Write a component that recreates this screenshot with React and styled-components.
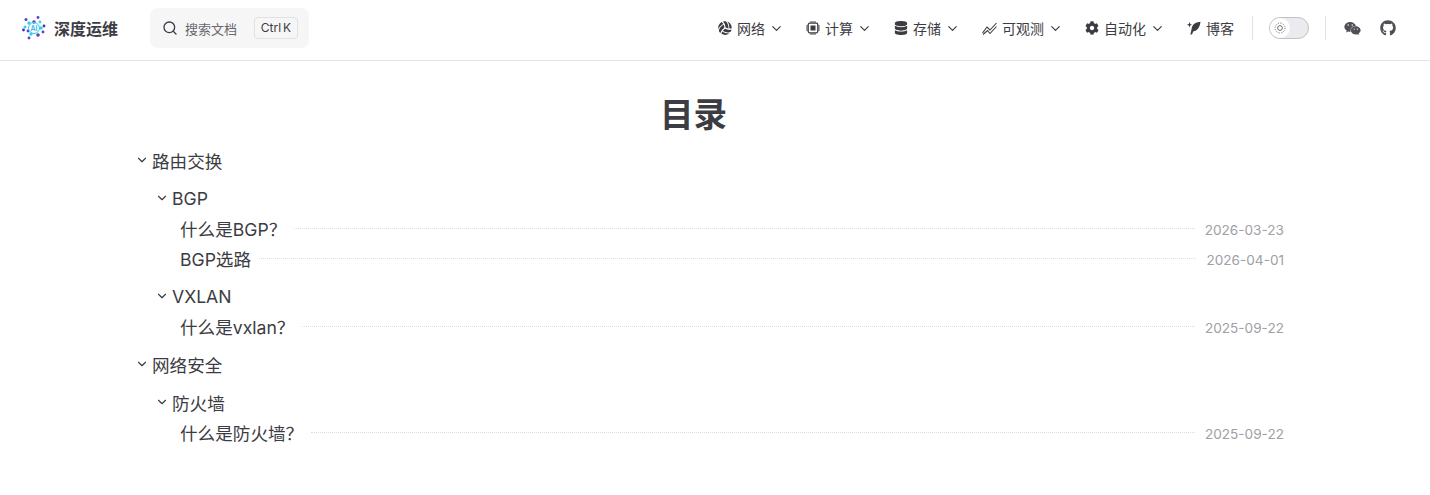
import React from "react";
import styled, { createGlobalStyle } from "styled-components";
import { ChevronDown, Search } from "lucide-react";
import { FaVolleyballBall, FaDatabase, FaCog, FaWeixin, FaGithub } from "react-icons/fa";

const GlobalStyle = createGlobalStyle`
  body {
    margin: 0;
    background: #fff;
    color: #3c3c43;
    font-family: Inter, "Noto Sans CJK SC", sans-serif;
  }
`;

const Header = styled.header`
  box-sizing: border-box;
  height: 61px;
  border-bottom: 1px solid #e2e2e3;
  display: flex;
  align-items: center;
  padding: 0 34px 4px 22px;
`;

const Brand = styled.div`
  display: flex;
  align-items: center;
  gap: 7px;
  font-size: 16px;
  font-weight: 600;
  color: #3c3c43;
`;

const Logo = styled.svg`
  width: 25px;
  height: 25px;
`;

const SearchBox = styled.div`
  margin-left: 32px;
  width: 159px;
  height: 40px;
  box-sizing: border-box;
  padding: 0 11px 0 12px;
  background: #f6f6f7;
  border-radius: 8px;
  display: flex;
  align-items: center;
  gap: 7px;
  font-size: 13px;
  color: #67676c;
`;

const Kbd = styled.span`
  margin-left: auto;
  border: 1px solid #e2e2e3;
  border-radius: 4px;
  padding: 0 6px;
  height: 20px;
  line-height: 20px;
  font-size: 12px;
  word-spacing: -1.5px;
  color: #3c3c43;
`;

const Nav = styled.nav`
  margin-left: auto;
  display: flex;
  align-items: center;
`;

const NavItem = styled.div`
  display: flex;
  align-items: center;
  margin-left: 22px;
  font-size: 14px;
  color: #3c3c43;
  & > svg:first-child { margin-right: 5px; }
  & > svg:nth-child(2) { margin-left: 4px; color: #3c3c43; }
`;

const Divider = styled.span`
  width: 1px;
  height: 24px;
  background: #e2e2e3;
  margin: 0 16px 0 ${(p) => p.$left}px;
`;

const Toggle = styled.span`
  width: 40px;
  height: 22px;
  box-sizing: border-box;
  border: 1px solid #c2c2c4;
  border-radius: 11px;
  background: #ebebef;
  display: flex;
  align-items: center;
`;

const Knob = styled.span`
  width: 20px;
  height: 20px;
  border-radius: 50%;
  background: #fff;
  display: flex;
  align-items: center;
  justify-content: center;
`;

const Social = styled.span`
  display: flex;
  margin-left: ${(p) => p.$gap}px;
  color: #4f4f55;
`;

const Main = styled.main`
  width: 1181px;
  margin-left: 103px;
`;

const Title = styled.h1`
  margin: 0;
  padding: 34px 0 2px;
  text-align: center;
  font-size: 33.6px;
  line-height: 40px;
  font-weight: 600;
`;

const GroupTitle = styled.div`
  display: flex;
  align-items: center;
  gap: 3px;
  padding-left: ${(p) => (p.$level === 1 ? 32 : 52)}px;
  margin-top: 8px;
  height: 30px;
  font-size: 17.6px;
  & > svg { color: #3c3c43; }
`;

const ArticleRow = styled.div`
  display: flex;
  align-items: center;
  padding-left: 77px;
  height: 30px;
  font-size: 17.6px;
`;

const Dots = styled.span`
  flex: 1;
  border-top: 1px dotted #dcdcdc;
  margin: 0 10px 0 8px;
`;

const DateText = styled.span`
  font-size: 13.6px;
  color: #a0a0a5;
  padding-top: 4px;
`;

const tree = [
  {
    title: "路由交换",
    groups: [
      {
        title: "BGP",
        items: [
          { name: "什么是BGP？", date: "2026-03-23" },
          { name: "BGP选路", date: "2026-04-01" },
        ],
      },
      { title: "VXLAN", items: [{ name: "什么是vxlan？", date: "2025-09-22" }] },
    ],
  },
  {
    title: "网络安全",
    groups: [{ title: "防火墙", items: [{ name: "什么是防火墙？", date: "2025-09-22" }] }],
  },
];

function ChipIcon() {
  return (
    <svg width="14" height="14" viewBox="0 0 14 14" fill="none" stroke="#3c3c43">
      <rect x="2.2" y="2.2" width="9.6" height="9.6" rx="1.5" strokeWidth="1.3" />
      <rect x="4.5" y="4.5" width="5" height="5" fill="#3c3c43" stroke="none" />
      <path d="M5 0v2M7 0v2M9 0v2M5 12v2M7 12v2M9 12v2M0 5h2M0 7h2M0 9h2M12 5h2M12 7h2M12 9h2" strokeWidth="0.9" />
    </svg>
  );
}

function TrendIcon() {
  return (
    <svg width="15" height="14" viewBox="0 0 15 14" fill="none" stroke="#3c3c43" strokeWidth="1.1">
      <path d="M0.5 12 5 6l3 3 6.5-7" />
      <path d="M1 13.5 5.5 9.5 8 12.5l6.5-7" />
    </svg>
  );
}

function QuillIcon() {
  return (
    <svg width="14" height="14" viewBox="0 0 14 14" fill="#3c3c43">
      <path d="M13.5 1C8.5 1 5 3.5 4.6 8L3.4 13.4 5 13.6 6.2 10.4C10.5 10 12.8 6 13.5 1Z" />
      <path d="M2.5 1 3.2 3 5 3.7 3.2 4.4 2.5 6.4 1.8 4.4 0 3.7 1.8 3Z" />
    </svg>
  );
}

const navItems = [
  { label: "网络", icon: <FaVolleyballBall size={14} />, arrow: true },
  { label: "计算", icon: <ChipIcon />, arrow: true },
  { label: "存储", icon: <FaDatabase size={14} />, arrow: true },
  { label: "可观测", icon: <TrendIcon />, arrow: true },
  { label: "自动化", icon: <FaCog size={14} />, arrow: true },
  { label: "博客", icon: <QuillIcon />, arrow: false },
];

const logoDots = [
  [16, 1.5, 1.4, "#5b3fc4"], [4, 3.5, 1.5, "#5b3fc4"], [12, 6, 1.8, "#5b3fc4"],
  [22, 10, 1.4, "#3b2fc0"], [1.5, 14, 1.4, "#3b2fc0"], [16, 19, 1.8, "#5b3fc4"],
  [7, 22, 1.4, "#5b3fc4"], [21, 16, 1.4, "#5b3fc4"], [7, 7, 1.7, "#35d0ee"],
  [3, 11, 1.5, "#35d0ee"], [19, 12, 1.7, "#35d0ee"], [9, 18, 1.7, "#35d0ee"],
  [6, 15, 1.4, "#5b3fc4"], [18, 6, 1.4, "#35d0ee"],
];

function LogoMark() {
  return (
    <Logo viewBox="0 0 25 25">
      {logoDots.map(([cx, cy, r, fill]) => (
        <circle key={`${cx}-${cy}`} cx={cx} cy={cy} r={r} fill={fill} />
      ))}
      <circle cx="12" cy="12" r="5.5" fill="none" stroke="#35d0ee" strokeWidth="1" />
      <text x="12" y="14.5" textAnchor="middle" fontSize="7" fontWeight="600" fill="#35b5ee">AI</text>
    </Logo>
  );
}

export default function App() {
  return (
    <>
      <GlobalStyle />
      <Header>
        <Brand>
          <LogoMark />
          深度运维
        </Brand>
        <SearchBox>
          <Search size={16} color="#3c3c43" />
          搜索文档
          <Kbd>Ctrl K</Kbd>
        </SearchBox>
        <Nav>
          {navItems.map((item) => (
            <NavItem key={item.label}>
              {item.icon}
              {item.label}
              {item.arrow && <ChevronDown size={15} strokeWidth={1.9} />}
            </NavItem>
          ))}
          <Divider $left={18} />
          <Toggle>
            <Knob>
              <svg width="12" height="12" viewBox="0 0 12 12" fill="none" stroke="#67676c" strokeWidth="0.9">
                <circle cx="6" cy="6" r="2.4" />
                <circle cx="6" cy="6" r="5" strokeDasharray="1.2 1.4" />
              </svg>
            </Knob>
          </Toggle>
          <Divider $left={16} />
          <Social $gap={2}><FaWeixin size={17} /></Social>
          <Social $gap={19}><FaGithub size={16} /></Social>
        </Nav>
      </Header>
      <Main>
        <Title>目录</Title>
        {tree.map((section) => (
          <section key={section.title}>
            <GroupTitle $level={1}>
              <ChevronDown size={14} strokeWidth={2} />
              {section.title}
            </GroupTitle>
            {section.groups.map((group) => (
              <div key={group.title}>
                <GroupTitle $level={2}>
                  <ChevronDown size={14} strokeWidth={2} />
                  {group.title}
                </GroupTitle>
                {group.items.map((item) => (
                  <ArticleRow key={item.name}>
                    {item.name}
                    <Dots />
                    <DateText>{item.date}</DateText>
                  </ArticleRow>
                ))}
              </div>
            ))}
          </section>
        ))}
      </Main>
    </>
  );
}
